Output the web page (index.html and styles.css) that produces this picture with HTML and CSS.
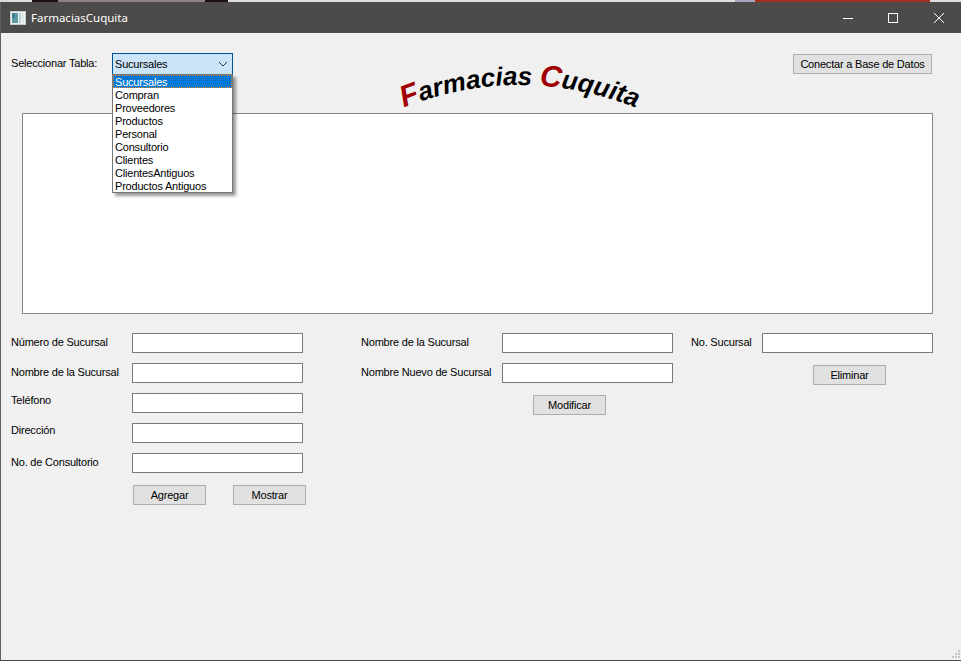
FILE: index.html
```html
<!DOCTYPE html>
<html lang="es">
<head>
  <meta charset="UTF-8" />
  <title>FarmaciasCuquita</title>
  <link rel="stylesheet" href="styles.css">
</head>
<body>
  <div class="wallpaper"></div>
  <div class="window">
    <div class="titlebar">
      <svg class="app-icon" width="16" height="16" viewBox="0 0 16 16">
        <rect x="0.5" y="1.5" width="15" height="13" fill="#eef2f2" stroke="#c4cccc"/>
        <rect x="2" y="3" width="6" height="10" fill="#5f98a3"/>
        <rect x="2" y="3" width="3" height="5" fill="#3c7f90"/>
        <rect x="9" y="3" width="2" height="10" fill="#b7d0d3"/>
        <rect x="12" y="3" width="2" height="10" fill="#dde6e6"/>
      </svg>
      <span class="title">FarmaciasCuquita</span>
      <div class="controls">
        <span class="ctl"><svg width="12" height="12" viewBox="0 0 12 12"><path d="M1 6.5h10" stroke="#fff" fill="none"/></svg></span>
        <span class="ctl"><svg width="12" height="12" viewBox="0 0 12 12"><rect x="1.5" y="1.5" width="9" height="9" stroke="#fff" fill="none"/></svg></span>
        <span class="ctl"><svg width="12" height="12" viewBox="0 0 12 12"><path d="M1 1l10 10M11 1L1 11" stroke="#fff" fill="none"/></svg></span>
      </div>
    </div>

    <div class="content">
      <div class="toolbar">
        <span class="label table-label">Seleccionar Tabla:</span>
        <div class="combo-wrap">
          <div class="combo">
            <span>Sucursales</span>
            <svg width="10" height="6" viewBox="0 0 10 6"><path d="M1 1l4 4 4-4" stroke="#333" fill="none"/></svg>
          </div>
          <ul class="combo-list">
            <li class="selected">Sucursales</li>
            <li>Compran</li>
            <li>Proveedores</li>
            <li>Productos</li>
            <li>Personal</li>
            <li>Consultorio</li>
            <li>Clientes</li>
            <li>ClientesAntiguos</li>
            <li>Productos Antiguos</li>
          </ul>
        </div>
        <svg class="logo" width="262" height="70" viewBox="0 0 262 70">
          <defs>
            <path id="arc" d="M10 63 Q 130 13 254 63"/>
          </defs>
          <text class="logo-text"><textPath href="#arc" startOffset="50%" text-anchor="middle"><tspan class="logo-cap">F</tspan>armacias <tspan class="logo-cap">C</tspan>uquita</textPath></text>
        </svg>
        <button class="btn connect">Conectar a Base de Datos</button>
      </div>

      <div class="table-box"></div>

      <div class="forms">
        <div class="form add-form">
          <div class="row"><span class="label">Número de Sucursal</span><input class="field"></div>
          <div class="row"><span class="label">Nombre de la Sucursal</span><input class="field"></div>
          <div class="row"><span class="label up">Teléfono</span><input class="field"></div>
          <div class="row"><span class="label up">Dirección</span><input class="field"></div>
          <div class="row"><span class="label">No. de Consultorio</span><input class="field"></div>
          <div class="actions add-actions">
            <button class="btn small">Agregar</button>
            <button class="btn small">Mostrar</button>
          </div>
        </div>

        <div class="form edit-form">
          <div class="row"><span class="label">Nombre de la Sucursal</span><input class="field"></div>
          <div class="row"><span class="label">Nombre Nuevo de Sucursal</span><input class="field"></div>
          <div class="actions edit-actions">
            <button class="btn small">Modificar</button>
          </div>
        </div>

        <div class="form delete-form">
          <div class="row"><span class="label">No. Sucursal</span><input class="field"></div>
          <div class="actions delete-actions">
            <button class="btn small">Eliminar</button>
          </div>
        </div>
      </div>
      <svg class="grip" width="10" height="10" viewBox="0 0 10 10" fill="#c4c4c4">
        <rect x="7" y="0" width="2" height="2"/><rect x="4" y="3" width="2" height="2"/><rect x="7" y="3" width="2" height="2"/>
        <rect x="1" y="6" width="2" height="2"/><rect x="4" y="6" width="2" height="2"/><rect x="7" y="6" width="2" height="2"/>
      </svg>
    </div>
  </div>
</body>
</html>
```

FILE: styles.css
```css
* {
  box-sizing: border-box;
  margin: 0;
  padding: 0;
}
html, body {
  width: 961px;
  height: 661px;
  overflow: hidden;
}
body {
  font-family: 'Liberation Sans', sans-serif;
  font-size: 11px;
  letter-spacing: -0.2px;
  color: #000;
  background: #f0f0f0;
}
.wallpaper {
  height: 2px;
  background: linear-gradient(90deg, #dcdcdc 0 32px, #1c1014 32px 58px, #8d8088 58px 205px, #1c1014 205px 228px, #dedede 228px 735px, #a9a5bd 735px 755px, #a3301f 755px 930px, #dedede 930px);
}
.window {
  height: 659px;
  display: flex;
  flex-direction: column;
  border-left: 1px solid #5f5f5f;
  border-bottom: 1px solid #4d4b49;
}
.titlebar {
  height: 31px;
  background: #4d4b49;
  color: #fff;
  display: flex;
  align-items: center;
  padding-left: 9px;
  font-family: 'Noto Sans', sans-serif;
  font-size: 11.5px;
  letter-spacing: 0;
}
.app-icon {
  margin-right: 5px;
}
.controls {
  margin-left: auto;
  display: flex;
}
.ctl {
  width: 45px;
  height: 30px;
  display: flex;
  align-items: center;
  justify-content: center;
}
.ctl:last-child {
  margin-left: 1px;
}
.content {
  flex: 1;
  position: relative;
  background: #f0f0f0;
}
.toolbar {
  height: 80px;
  display: flex;
  align-items: flex-start;
  padding: 20px 29px 0 10px;
}
.label {
  color: #000;
  white-space: nowrap;
}
.table-label {
  width: 101px;
  line-height: 21px;
}
.combo-wrap {
  position: relative;
  width: 121px;
}
.combo {
  height: 22px;
  background: #cce4f7;
  border: 1px solid #005499;
  display: flex;
  align-items: center;
  justify-content: space-between;
  padding: 0 4px 1px 2px;
}
.combo-list {
  position: absolute;
  top: 21px;
  left: 0;
  width: 121px;
  list-style: none;
  background: #fff;
  border: 1px solid #767676;
  box-shadow: 3px 3px 3px rgba(0, 0, 0, 0.4);
  z-index: 2;
}
.combo-list li {
  height: 13px;
  line-height: 15px;
  padding-left: 2px;
}
.combo-list .selected {
  background: #0078d7;
  color: #fff;
  outline: 1px dotted #e08a2c;
  outline-offset: -1px;
}
.logo {
  margin-left: 155px;
  margin-top: -6px;
  flex: none;
}
.logo-text {
  font-family: 'Liberation Sans', sans-serif;
  font-size: 26px;
  font-weight: bold;
  font-style: italic;
  letter-spacing: 0;
}
.logo-cap {
  fill: #a00000;
  font-size: 30px;
}
.btn {
  font: inherit;
  letter-spacing: inherit;
  background: #e1e1e1;
  border: 1px solid #adadad;
  color: #000;
  height: 20px;
  padding-bottom: 1px;
}
.connect {
  margin-left: auto;
  margin-top: 1px;
  width: 139px;
}
.small {
  width: 73px;
}
.table-box {
  height: 201px;
  margin: 0 28px 0 21px;
  background: #fff;
  border: 1px solid #828790;
}
.forms {
  display: flex;
  padding: 19px 28px 0 10px;
}
.row {
  height: 20px;
  margin-bottom: 10px;
  display: flex;
  align-items: center;
  justify-content: space-between;
}
.row .label {
  padding-bottom: 2px;
}
.row .up {
  padding-bottom: 6px;
}
.field {
  width: 171px;
  height: 20px;
  background: #fff;
  border: 1px solid #7a7a7a;
}
.add-form {
  width: 292px;
}
.edit-form {
  width: 312px;
  margin-left: 58px;
}
.delete-form {
  width: 242px;
  margin-left: 18px;
}
.actions {
  display: flex;
  margin-top: 12px;
}
.add-actions {
  margin-left: 122px;
  gap: 27px;
  width: 180px;
}
.edit-actions {
  margin-left: 172px;
}
.delete-actions {
  margin-left: 122px;
}
.grip {
  position: absolute;
  right: 0;
  bottom: 0;
}
```
